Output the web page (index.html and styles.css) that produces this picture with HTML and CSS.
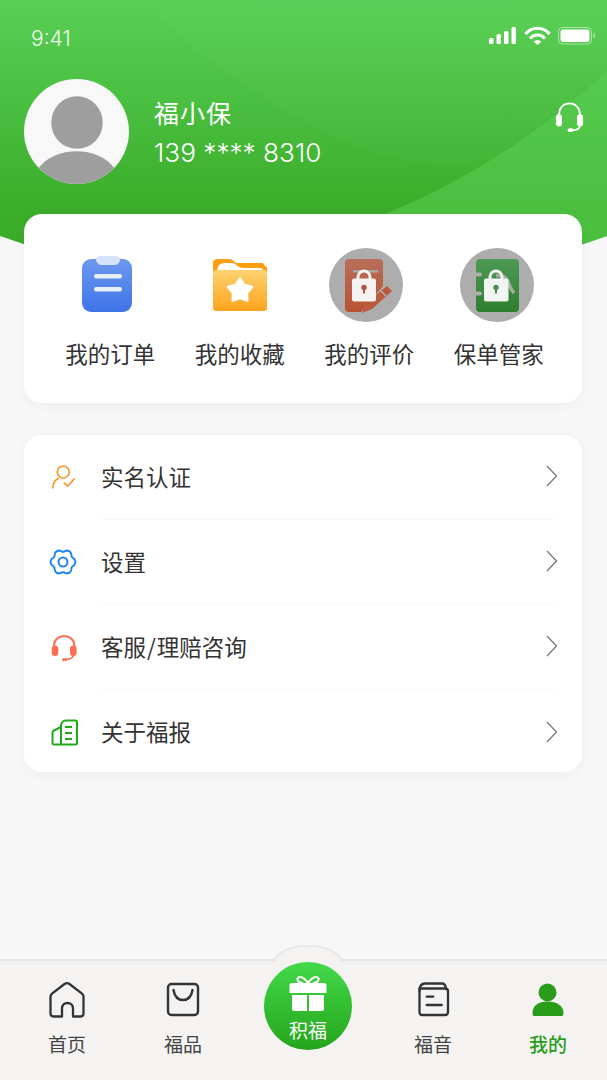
FILE: index.html
```html
<!DOCTYPE html>
<html lang="zh-CN">
<head>
<meta charset="utf-8">
<title>我的</title>
<link rel="stylesheet" href="styles.css">
</head>
<body>
<div class="phone">
  <svg class="hero-bg" width="607" height="300" viewBox="0 0 607 300">
    <defs>
      <linearGradient id="hg" x1="0" y1="0" x2="0" y2="1"><stop offset="0" stop-color="#59cf55"/><stop offset="0.72" stop-color="#3bad2a"/><stop offset="1" stop-color="#38aa26"/></linearGradient>
    </defs>
    <path d="M0 0H607V236Q303 345 0 236Z" fill="url(#hg)"/>
    <path d="M160 20C209 63 271 107 340 140C385 158 430 168 476 167C530 135 580 95 607 70V0H160Z" fill="#fff" opacity="0.02"/>
    <path d="M385 214C470 180 550 125 607 70V236Q520 268 440 280Z" fill="#5dd155" opacity="0.5"/>
  </svg>

  <header class="hero">
    <div class="status">
      <span class="time">9:41</span>
      <svg width="108" height="20" viewBox="0 0 108 20">
        <g fill="#fff">
          <rect x="0" y="11" width="4.500" height="6" rx="1.500"/>
          <rect x="7.500" y="7" width="4.500" height="10" rx="1.500"/>
          <rect x="15" y="4" width="4.500" height="13" rx="1.500"/>
          <rect x="22.500" y="0" width="4.500" height="17" rx="1.500"/>
        </g>
        <g fill="none" stroke="#fff" stroke-width="3">
          <path d="M36.500 7A15.500 15.500 0 0 1 60.500 7"/>
          <path d="M41 11.500A10 10 0 0 1 56 11.500"/>
        </g>
        <path d="M44.500 14.500Q48.500 11.500 52.500 14.500L48.500 18Z" fill="#fff"/>
        <rect x="69.500" y="0.500" width="33" height="16.500" rx="4" fill="none" stroke="#fff" stroke-opacity="0.5"/>
        <rect x="71.500" y="2.500" width="29" height="12.500" rx="2.500" fill="#fff"/>
        <rect x="104.500" y="6" width="1.500" height="5" rx="0.700" fill="#fff" fill-opacity="0.5"/>
      </svg>
    </div>
    <div class="profile">
      <svg class="avatar" width="105" height="105" viewBox="0 0 106 106">
        <defs><clipPath id="ac"><circle cx="53" cy="53" r="53"/></clipPath></defs>
        <circle cx="53" cy="53" r="53" fill="#f8f8f8"/>
        <g clip-path="url(#ac)" fill="#9e9e9e">
          <ellipse cx="53.500" cy="44" rx="26" ry="26.500"/>
          <path d="M14 91C22 79 38 73 53 73C68 73 84 79 92 91V110H14Z"/>
        </g>
      </svg>
      <div class="who">
        <div class="name">福小保</div>
        <div class="phone-no">139 **** 8310</div>
      </div>
      <svg class="support" width="29" height="30" viewBox="0 0 30 32">
        <path d="M4 14V11.500A11 11 0 0 1 26 11.500V14" fill="none" stroke="#fff" stroke-width="1.900"/>
        <rect x="0.500" y="12" width="6.500" height="13" rx="3.200" fill="#fff"/>
        <rect x="23" y="12" width="6.500" height="13" rx="3.200" fill="#fff"/>
        <path d="M26 24C26 27.500 23 29 18 29" fill="none" stroke="#fff" stroke-width="1.900"/>
        <rect x="13" y="27" width="6" height="4" rx="2" fill="#fff"/>
      </svg>
    </div>
  </header>

  <main class="content">
    <section class="card shortcuts">
      <a class="shortcut">
        <svg width="74" height="74" viewBox="0 0 74 74">
          <defs>
            <linearGradient id="bl" x1="0" y1="0" x2="0" y2="1"><stop offset="0" stop-color="#6d98ef"/><stop offset="1" stop-color="#3f74e8"/></linearGradient>
          </defs>
          <rect x="9" y="11" width="50" height="53" rx="9" fill="url(#bl)"/>
          <path d="M23 11C23 9 25 8 27 8H43C45 8 47 9 47 11C47 15 44 17 41 17H29C26 17 23 15 23 11Z" fill="#d6e4fb"/>
          <rect x="21" y="26" width="28" height="4.500" rx="2.200" fill="#e9f0fd"/>
          <rect x="21" y="39" width="28" height="4.500" rx="2.200" fill="#e9f0fd"/>
        </svg>
        <span>我的订单</span>
      </a>
      <a class="shortcut">
        <svg width="74" height="74" viewBox="0 0 74 74">
          <defs>
            <linearGradient id="or" x1="0" y1="0" x2="0" y2="1"><stop offset="0" stop-color="#fbd271"/><stop offset="1" stop-color="#ffa41c"/></linearGradient>
          </defs>
          <path d="M10 15C10 12.500 12 11 14 11H26C29 11 31 13 33 15H60L62 18C63.500 18 64 19.500 64 21V30H10Z" fill="#ff9f0f"/>
          <path d="M14.500 21C15 17 18 15 22 15H30C33 16 36 20 40 20H58.500L61 23H15Z" fill="#fff"/>
          <path d="M10 25C10 23 11.500 22 13 22H61C62.500 22 64 23 64 25V60C64 62 62.500 63 61 63H13C11.500 63 10 62 10 60Z" fill="url(#or)"/>
          <path d="M39 26.500L43.800 33.500L52 35.700L46.700 42.300L47 50.700L39 47.800L31 50.700L31.300 42.300L26 35.700L34.200 33.500Z" transform="translate(37 42) scale(.92) translate(-39 -39)" fill="#fff" stroke="#fff" stroke-width="2.500" stroke-linejoin="round"/>
        </svg>
        <span>我的收藏</span>
      </a>
      <a class="shortcut">
        <svg width="74" height="74" viewBox="3 0 74 74">
          <defs>
            <linearGradient id="rd" x1="0" y1="0" x2="0" y2="1"><stop offset="0" stop-color="#b86f5a"/><stop offset="1" stop-color="#ba5032"/></linearGradient>
          </defs>
          <circle cx="37" cy="37" r="37" fill="#adadad"/>
          <path d="M20 11H50C52.500 11 54 12.500 54 15V38L32 64H20C17.500 64 16 62.500 16 60V15C16 12.500 17.500 11 20 11Z" fill="url(#rd)"/>
          <path d="M33 65L37 55L58 38L63 43L43 61Z" fill="#bb5a3c"/>
          <path d="M52 43L57 48" stroke="#adadad" stroke-width="1.500"/>
          <rect x="24" y="22" width="25" height="2.500" fill="#a9a9a9"/>
          <path d="M29 32V29A6 6 0 0 1 41 29V32" fill="none" stroke="#f5f3f2" stroke-width="3"/>
          <rect x="23" y="30.500" width="24" height="23" rx="2" fill="#f5f3f2"/>
          <circle cx="35" cy="39.500" r="2.700" fill="#b0553c"/>
          <path d="M34 40H36V45.500H34Z" fill="#b0553c"/>
        </svg>
        <span>我的评价</span>
      </a>
      <a class="shortcut">
        <svg width="74" height="74" viewBox="2 0 74 74">
          <defs>
            <linearGradient id="gr" x1="0" y1="0" x2="0" y2="1"><stop offset="0" stop-color="#4d9a55"/><stop offset="1" stop-color="#2f7d2e"/></linearGradient>
          </defs>
          <circle cx="37" cy="37" r="37" fill="#adadad"/>
          <path d="M20 11H55C57.500 11 59 12.500 59 15V60C59 62.500 57.500 64 55 64H20C17.500 64 16 62.500 16 60V15C16 12.500 17.500 11 20 11Z" fill="url(#gr)"/>
          <rect x="15" y="24.500" width="7" height="4" rx="2" fill="#adadad"/>
          <rect x="15" y="43.500" width="7" height="4" rx="2" fill="#adadad"/>
          <path d="M36 28C42 26 47 30 48 34C50 39 52 43 54 45" fill="none" stroke="#a3ada3" stroke-width="3.500"/>
          <path d="M30 32V29A6 6 0 0 1 42 29V32" fill="none" stroke="#f1f4f0" stroke-width="3"/>
          <rect x="24" y="30.500" width="24.500" height="23" rx="2" fill="#f1f4f0"/>
          <circle cx="36" cy="39.500" r="2.700" fill="#4b8a4d"/>
          <path d="M35 40H37V45.500H35Z" fill="#4b8a4d"/>
        </svg>
        <span>保单管家</span>
      </a>
    </section>

    <section class="card menu">
      <a class="row">
        <svg class="row-icon" width="30" height="30" viewBox="0 0 30 30" fill="none" stroke="#fb9526" stroke-width="1.700" stroke-linecap="round" stroke-linejoin="round">
          <circle cx="14.300" cy="9" r="6"/>
          <path d="M3.700 24.800C4 20 6 17 9.500 15.300"/>
          <path d="M15.300 20.200L18.700 23.200L25.300 15.800"/>
        </svg>
        <span class="row-label">实名认证</span>
        <svg class="chev" width="12" height="22" viewBox="0 0 12 22"><path d="M1 1L10.500 11L1 21" fill="none" stroke="#777" stroke-width="1.300"/></svg>
      </a>
      <a class="row">
        <svg class="row-icon" width="30" height="30" viewBox="0 0 30 30" fill="none" stroke="#1f85f1" stroke-width="2" stroke-linejoin="round">
          <defs><path id="lobe" d="M8.660 -5L11 -3.200C12.900 -1.600 12.900 1.600 11 3.200L8.660 5"/></defs>
          <g transform="translate(14 14)">
            <use href="#lobe"/>
            <use href="#lobe" transform="rotate(60)"/>
            <use href="#lobe" transform="rotate(120)"/>
            <use href="#lobe" transform="rotate(180)"/>
            <use href="#lobe" transform="rotate(240)"/>
            <use href="#lobe" transform="rotate(300)"/>
            <circle r="4.500"/>
          </g>
        </svg>
        <span class="row-label">设置</span>
        <svg class="chev" width="12" height="22" viewBox="0 0 12 22"><path d="M1 1L10.500 11L1 21" fill="none" stroke="#777" stroke-width="1.300"/></svg>
      </a>
      <a class="row">
        <svg class="row-icon" width="30" height="30" viewBox="0 0 30 30">
          <path d="M5 13V12.500A10.200 9.500 0 0 1 25.400 12.500V13" fill="none" stroke="#fb7052" stroke-width="2"/>
          <rect x="2.700" y="12.500" width="6.600" height="10.500" rx="3.300" fill="#fb7052"/>
          <rect x="21" y="12.500" width="6.600" height="10.500" rx="3.300" fill="#fb7052"/>
          <path d="M24.500 22C24.500 25 22 26 17 26.500" fill="none" stroke="#fb7052" stroke-width="1.600"/>
          <rect x="13" y="25.200" width="5.500" height="2.800" rx="1.400" fill="#fb7052"/>
        </svg>
        <span class="row-label">客服<span class="slash">/</span>理赔咨询</span>
        <svg class="chev" width="12" height="22" viewBox="0 0 12 22"><path d="M1 1L10.500 11L1 21" fill="none" stroke="#777" stroke-width="1.300"/></svg>
      </a>
      <a class="row">
        <svg class="row-icon" width="30" height="30" viewBox="0 0 30 30" fill="none" stroke="#1faa1c" stroke-width="2" stroke-linejoin="round">
          <path d="M12 26.500H5C4 26.500 3.500 26 3.500 25V14.500C3.500 13.500 4 13 5 12.500L12 9"/>
          <path d="M12 26.500V8C12 5 14 2.500 17 2.500H26.500C27.500 2.500 28 3 28 4V25C28 26 27.500 26.500 26.500 26.500Z"/>
          <path d="M16 9H23M16 15H23M16 21H23"/>
        </svg>
        <span class="row-label">关于福报</span>
        <svg class="chev" width="12" height="22" viewBox="0 0 12 22"><path d="M1 1L10.500 11L1 21" fill="none" stroke="#777" stroke-width="1.300"/></svg>
      </a>
    </section>
  </main>

  <nav class="tabbar">
    <div class="bump"></div>
    <a class="tab">
      <svg width="38" height="38" viewBox="0 0 38 38" fill="none" stroke="#333" stroke-width="2.300" stroke-linejoin="round">
        <path d="M2.500 15C2.500 13.500 3 12.500 4 11.700L16.500 2C18 1 20 1 21.500 2L34 11.700C35 12.500 35.500 13.500 35.500 15V31.500C35.500 33.500 34.500 34.500 32.500 34.500H25V26.500C25 23 22.500 21 19.500 21C16.500 21 14 23 14 26.500V34.500H5.500C3.500 34.500 2.500 33.500 2.500 31.500Z"/>
      </svg>
      <span>首页</span>
    </a>
    <a class="tab">
      <svg width="38" height="38" viewBox="0 0 38 38" fill="none" stroke="#333" stroke-width="2.400" stroke-linecap="round">
        <rect x="4" y="2" width="30" height="31" rx="3.500"/>
        <path d="M9.500 8C10.500 14 14 18 19 18C24 18 27.500 14 28.500 8"/>
      </svg>
      <span>福品</span>
    </a>
    <a class="tab tab-center">
      <div class="gift-btn">
        <svg width="38" height="36" viewBox="0 0 38 36">
          <path d="M14 7C9 7 7 3 9.500 1.500C12 0 16 3 19 7C22 3 26 0 28.500 1.500C31 3 29 7 24 7" fill="none" stroke="#fff" stroke-width="2.200"/>
          <path d="M3 7H35C36.500 7 37.500 8 37.500 9.500V17H0.500V9.500C0.500 8 1.500 7 3 7Z" fill="#fff"/>
          <path d="M3 19H18V35H5C4 35 3 34 3 33ZM20 19H35V33C35 34 34 35 33 35H20Z" fill="#fff"/>
        </svg>
        <span>积福</span>
      </div>
    </a>
    <a class="tab">
      <svg width="38" height="38" viewBox="0 0 38 38" fill="none" stroke="#333" stroke-width="2.300" stroke-linecap="round" stroke-linejoin="round">
        <path d="M5.500 9C5.500 3.500 7.500 1.500 11 1.500H28C30.500 1.500 31.500 3 32 6.500"/>
        <path d="M5.500 6.500H31C33 6.500 34 7.500 34 9.500V30C34 32 33 33 31 33H8C6.500 33 5.500 32 5.500 30Z"/>
        <path d="M12.700 14.700H19.300M12.700 23H27.700"/>
      </svg>
      <span>福音</span>
    </a>
    <a class="tab on">
      <svg width="38" height="38" viewBox="0 0 38 38" fill="#299c1a">
        <circle cx="18.500" cy="10.500" r="9"/>
        <path d="M3.500 31C3.500 24 9 19.500 18.500 19.500C28 19.500 34.500 24 34.500 31C34.500 33.500 33.500 34 32 34H6C4 34 3.500 33.500 3.500 31Z"/>
      </svg>
      <span>我的</span>
    </a>
  </nav>
</div>
</body>
</html>
```
FILE: styles.css
```css
* { box-sizing: border-box; }
html, body { margin: 0; padding: 0; }
body { font-family: "Noto Sans CJK SC", "Inter", sans-serif; background: #f7f7f7; }
a { display: block; color: inherit; text-decoration: none; }
svg { display: block; flex: none; overflow: visible; }

.phone {
  position: relative;
  width: 607px;
  height: 1080px;
  overflow: hidden;
  background: #f7f7f7;
  display: flex;
  flex-direction: column;
}
.hero-bg { position: absolute; left: 0; top: 0; }

.hero { position: relative; height: 214px; padding: 27px 10px 0 31px; color: #fff; }
.status { display: flex; align-items: flex-start; justify-content: space-between; height: 22px; }
.time { font-family: "Inter", sans-serif; font-size: 21px; font-weight: 300; line-height: 22px; padding-top: 1px; color: #f3fbf2; }
.profile { display: flex; align-items: center; margin: 30px 0 0 -7px; }
.avatar { margin-right: 25px; }
.who { flex: 1; padding-top: 1px; }
.name { font-size: 25px; letter-spacing: 1px; line-height: 36px; font-weight: 400; }
.phone-no { font-family: "Inter", sans-serif; font-size: 26.200px; font-weight: 300; line-height: 36px; margin-top: 5px; }
.support { margin: 0 13px 28px 0; }

.content { position: relative; flex: 1; padding: 0 25px 0 24px; display: flex; flex-direction: column; gap: 32px; }
.card { background: #fff; border-radius: 18px; box-shadow: 0 2px 14px rgba(0,0,0,0.04); }

.shortcuts { height: 189px; padding: 34px 18.500px 0 21.500px; display: grid; grid-template-columns: repeat(4, 1fr); }
.shortcut { display: flex; flex-direction: column; align-items: center; gap: 15px; font-size: 22.500px; line-height: 33px; color: #333; }
.shortcut span { white-space: nowrap; }

.menu { height: 337px; display: flex; flex-direction: column; padding-right: 24px; }
.row { position: relative; flex: none; height: 85px; display: flex; align-items: center; padding-left: 25px; }
.row:last-child { height: 82px; padding-top: 4px; }
.row + .row::before { content: ""; position: absolute; left: 76px; right: 1px; top: -1px; height: 1px; background: #f9f9f9; }
.row-icon { margin-right: 22px; }
.row-label { flex: 1; font-size: 22.500px; color: #333; line-height: 32px; padding-bottom: 4px; }
.slash { margin: 0 1px; }
.chev { margin-bottom: 3px; }

.tabbar {
  position: relative;
  height: 121px;
  background: #f4f3f2;
  border-top: 2px solid #e6e6e6;
  display: grid;
  grid-template-columns: 120px 112px 138px 112px 118px;
  padding: 0 0 0 7px;
}
.bump {
  position: absolute;
  left: 274px; top: -16px;
  width: 68px; height: 16px;
  background: #f4f3f2;
  border: 2px solid #e8e8e8;
  border-bottom: 0;
  border-radius: 34px 34px 0 0 / 16px 16px 0 0;
}
.tab { display: flex; flex-direction: column; align-items: center; padding-top: 21px; gap: 10px; font-size: 19px; line-height: 28px; color: #444; }
.tab.on { color: #299c1a; font-weight: 500; }
.tab-center { padding-top: 1px; position: relative; }
.gift-btn {
  width: 88px; height: 88px;
  border-radius: 50%;
  background: linear-gradient(#43d84a, #25a51c);
  color: #fff;
  display: flex; flex-direction: column; align-items: center;
  padding-top: 14px;
  gap: 4px;
  line-height: 28px;
  font-size: 19px;
}
```
